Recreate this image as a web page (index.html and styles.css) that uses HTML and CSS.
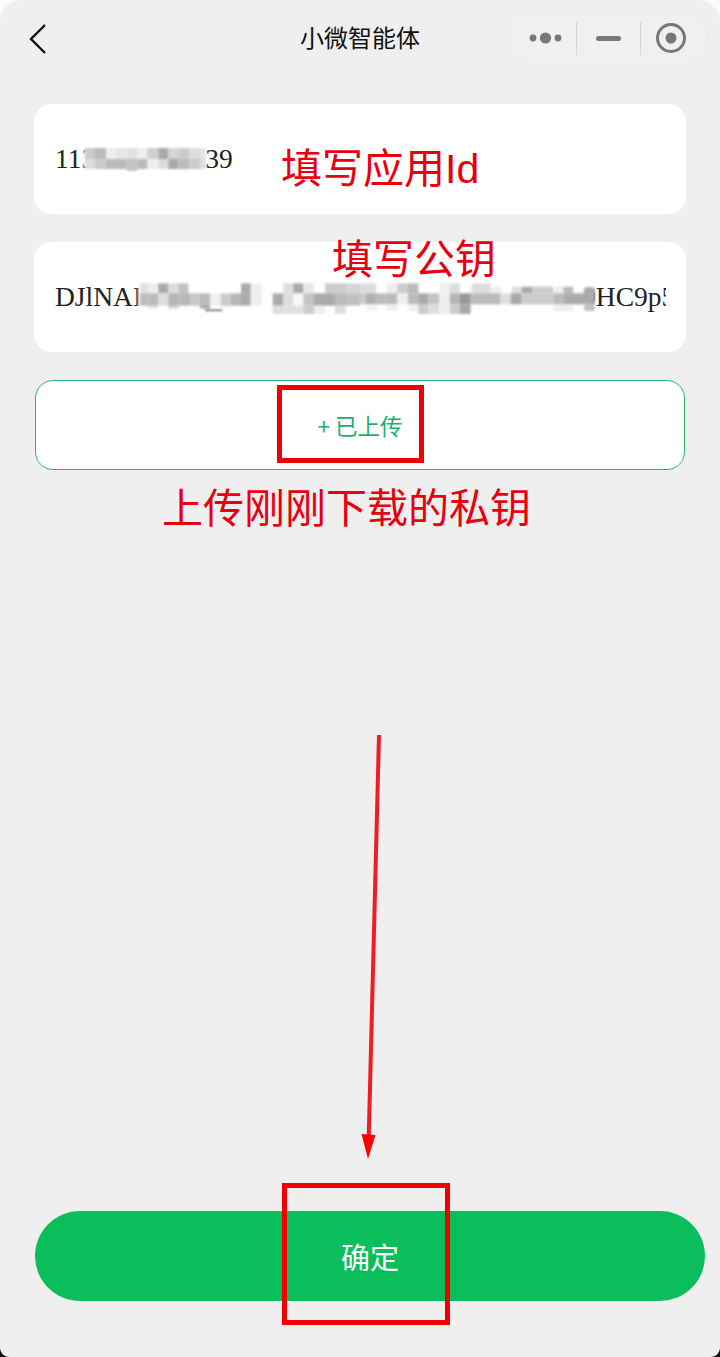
FILE: index.html
```html
<!DOCTYPE html>
<html lang="zh-CN">
<head>
<meta charset="utf-8">
<title>小微智能体</title>
<link rel="stylesheet" href="styles.css">
</head>
<body>
<div class="screen">
  <header class="nav">
    <svg class="back" width="20" height="32" viewBox="0 0 20 32"><path d="M17 2 L3 16 L17 30" fill="none" stroke="#111" stroke-width="2.4"/></svg>
    <h1 class="title">小微智能体</h1>
    <div class="capsule">
      <svg class="cap-dots" width="36" height="14" viewBox="0 0 36 14"><circle cx="5" cy="7" r="3.4"/><circle cx="17.5" cy="7" r="5.6"/><circle cx="30" cy="7" r="3.4"/></svg>
      <span class="cap-line cap-line-a"></span>
      <span class="cap-min"></span>
      <span class="cap-line cap-line-b"></span>
      <svg class="cap-rec" width="32" height="32" viewBox="0 0 32 32"><circle cx="16" cy="16" r="13.5" fill="none" stroke="#777" stroke-width="3"/><circle cx="16" cy="16" r="5.5" fill="#777"/></svg>
    </div>
  </header>

  <main class="form">
    <div class="field"><span class="value">1130000000039</span></div>
    <div class="field"><span class="value">DJlNAI000000000000000000000000000000000HC9p5x</span></div>
    <div class="upload">+ 已上传</div>
  </main>

  <button class="confirm">确定</button>

  <svg class="mosaic mosaic-id" width="124" height="24" viewBox="0 0 372 72">
    <rect x="0" y="0" width="372" height="72" rx="24" fill="#fff"/>
    <g>
      <rect x="6" y="3" width="30" height="33" fill="#ccc"/><rect x="36" y="3" width="33" height="33" fill="#bbb"/><rect x="69" y="3" width="30" height="33" fill="#eee"/><rect x="99" y="3" width="32" height="33" fill="#e6e6e6"/><rect x="131" y="3" width="32" height="33" fill="#e0e0e0"/><rect x="163" y="3" width="30" height="33" fill="#eee"/><rect x="193" y="3" width="33" height="33" fill="#d0d0d0"/><rect x="226" y="3" width="30" height="33" fill="#aaa"/><rect x="256" y="3" width="30" height="33" fill="#d5d5d5"/><rect x="286" y="3" width="33" height="33" fill="#ccc"/><rect x="319" y="3" width="32" height="33" fill="#ddd"/><rect x="351" y="3" width="18" height="33" fill="#e5e5e5"/>
      <rect x="6" y="36" width="30" height="30" fill="#ddd"/><rect x="36" y="36" width="33" height="30" fill="#ccc"/><rect x="69" y="36" width="30" height="30" fill="#bbb"/><rect x="99" y="36" width="32" height="30" fill="#bbb"/><rect x="131" y="36" width="32" height="36" fill="#c4c4c4"/><rect x="163" y="36" width="30" height="30" fill="#bbb"/><rect x="193" y="36" width="33" height="30" fill="#eee"/><rect x="226" y="36" width="30" height="30" fill="#ddd"/><rect x="256" y="36" width="30" height="30" fill="#a8a8a8"/><rect x="286" y="36" width="33" height="30" fill="#bbb"/><rect x="319" y="36" width="32" height="30" fill="#ccc"/><rect x="351" y="36" width="18" height="30" fill="#ddd"/>
    </g>
  </svg>

  <svg class="mosaic mosaic-key-a" width="240" height="50" viewBox="0 0 720 150">
    <rect x="24" y="20" width="696" height="100" fill="#fff"/>
    <rect x="30" y="25" width="25" height="30" fill="#e0e0e0"/><rect x="55" y="25" width="30" height="30" fill="#eee"/><rect x="85" y="25" width="30" height="30" fill="#aaa"/><rect x="115" y="25" width="30" height="30" fill="#ddd"/><rect x="145" y="25" width="30" height="30" fill="#c0c0c0"/><rect x="333" y="25" width="29" height="30" fill="#aaa"/><rect x="362" y="25" width="33" height="30" fill="#eee"/><rect x="460" y="25" width="30" height="30" fill="#ddd"/><rect x="490" y="25" width="30" height="30" fill="#aaa"/><rect x="520" y="25" width="32" height="30" fill="#e8e8e8"/><rect x="585" y="25" width="63" height="30" fill="#ccc"/><rect x="648" y="25" width="72" height="30" fill="#d5d5d5"/>
    <rect x="30" y="55" width="25" height="37" fill="#bbb"/><rect x="55" y="55" width="30" height="37" fill="#bbb"/><rect x="85" y="55" width="30" height="37" fill="#ddd"/><rect x="115" y="55" width="30" height="37" fill="#b5b5b5"/><rect x="145" y="55" width="35" height="37" fill="#b8b8b8"/><rect x="180" y="55" width="30" height="37" fill="#c8c8c8"/><rect x="210" y="55" width="30" height="37" fill="#bbb"/><rect x="240" y="55" width="32" height="37" fill="#f0f0f0"/><rect x="272" y="55" width="31" height="37" fill="#ccc"/><rect x="303" y="55" width="30" height="37" fill="#b8b8b8"/><rect x="333" y="55" width="29" height="37" fill="#aaa"/><rect x="362" y="55" width="33" height="37" fill="#eee"/><rect x="428" y="55" width="32" height="37" fill="#aaa"/><rect x="460" y="55" width="30" height="37" fill="#ddd"/><rect x="490" y="55" width="30" height="37" fill="#f8f8f8"/><rect x="520" y="55" width="32" height="37" fill="#c4c4c4"/><rect x="552" y="55" width="63" height="37" fill="#aaa"/><rect x="615" y="55" width="33" height="37" fill="#bbb"/><rect x="648" y="55" width="72" height="37" fill="#c0c0c0"/>
    <rect x="55" y="92" width="30" height="8" fill="#ddd"/><rect x="115" y="92" width="30" height="8" fill="#ccc"/><rect x="210" y="92" width="30" height="8" fill="#999"/><rect x="225" y="104" width="52" height="4" fill="#444"/><rect x="272" y="92" width="31" height="6" fill="#eee"/><rect x="428" y="92" width="32" height="25" fill="#ddd"/><rect x="460" y="92" width="60" height="25" fill="#e0e0e0"/><rect x="520" y="92" width="32" height="25" fill="#ccc"/><rect x="552" y="92" width="33" height="25" fill="#eee"/><rect x="615" y="92" width="33" height="25" fill="#ddd"/>
  </svg>

  <svg class="mosaic mosaic-key-b" width="240" height="50" viewBox="0 0 720 150">
    <rect x="0" y="20" width="700" height="100" fill="#fff"/>
    <rect x="0" y="25" width="48" height="30" fill="#ddd"/><rect x="80" y="25" width="32" height="30" fill="#eee"/><rect x="112" y="25" width="32" height="30" fill="#ccc"/><rect x="144" y="25" width="31" height="30" fill="#bbb"/><rect x="240" y="25" width="30" height="30" fill="#eee"/><rect x="270" y="25" width="30" height="30" fill="#ddd"/><rect x="335" y="25" width="55" height="30" fill="#ddd"/><rect x="390" y="35" width="35" height="20" fill="#eee"/><rect x="455" y="35" width="30" height="20" fill="#ddd"/><rect x="485" y="35" width="32" height="20" fill="#aaa"/><rect x="517" y="35" width="63" height="20" fill="#ccc"/><rect x="585" y="35" width="25" height="20" fill="#eee"/><rect x="610" y="35" width="30" height="20" fill="#bbb"/>
    <rect x="0" y="55" width="17" height="33" fill="#ccc"/><rect x="17" y="55" width="33" height="33" fill="#b0b0b0"/><rect x="50" y="55" width="30" height="33" fill="#bbb"/><rect x="80" y="55" width="32" height="33" fill="#bbb"/><rect x="112" y="55" width="32" height="33" fill="#eee"/><rect x="144" y="55" width="31" height="33" fill="#bbb"/><rect x="175" y="55" width="30" height="33" fill="#aaa"/><rect x="205" y="55" width="32" height="33" fill="#c4c4c4"/><rect x="237" y="55" width="33" height="33" fill="#eee"/><rect x="270" y="55" width="30" height="33" fill="#b5b5b5"/><rect x="300" y="55" width="32" height="33" fill="#999"/><rect x="332" y="55" width="88" height="33" fill="#bbb"/><rect x="420" y="55" width="32" height="33" fill="#ddd"/><rect x="452" y="55" width="33" height="33" fill="#aaa"/><rect x="485" y="55" width="95" height="33" fill="#ccc"/><rect x="580" y="55" width="30" height="33" fill="#bbb"/><rect x="610" y="55" width="62" height="33" fill="#aaa"/><rect x="672" y="37" width="33" height="51" rx="8" fill="#aaa"/>
    <rect x="20" y="88" width="30" height="20" fill="#f2f2f2"/><rect x="80" y="88" width="32" height="20" fill="#eee"/><rect x="144" y="88" width="31" height="20" fill="#f0f0f0"/><rect x="175" y="88" width="30" height="29" fill="#ccc"/><rect x="205" y="88" width="32" height="29" fill="#ddd"/><rect x="237" y="88" width="33" height="29" fill="#eee"/><rect x="270" y="88" width="30" height="29" fill="#ccc"/><rect x="300" y="88" width="32" height="29" fill="#aaa"/><rect x="580" y="88" width="60" height="20" fill="#eee"/><rect x="672" y="88" width="33" height="20" rx="8" fill="#c0c0c0"/>
  </svg>

  <span class="note note-id">填写应用Id</span>
  <span class="note note-key">填写公钥</span>
  <span class="note note-private">上传刚刚下载的私钥</span>
  <span class="mark mark-upload"></span>
  <span class="mark mark-confirm"></span>
  <svg class="arrow" width="40" height="440" viewBox="0 0 40 440">
    <path d="M29 1 L18.5 412" fill="none" stroke="#ee1c25" stroke-width="4"/>
    <path d="M11.5 400 L25.5 401 L18 425 Z" fill="#f00"/>
  </svg>
</div>
</body>
</html>
```

FILE: styles.css
```css
* { box-sizing: border-box; }

html, body {
  margin: 0;
  height: 1357px;
  overflow: hidden;
  background: linear-gradient(#fafafa 0 50%, #111 50% 100%);
}

.screen {
  position: relative;
  display: flex;
  flex-direction: column;
  width: 720px;
  height: 1357px;
  background: #efefef;
  border-radius: 22px 22px 9px 9px;
  font-family: "Noto Sans CJK SC", "Noto Sans", sans-serif;
}

.nav {
  position: relative;
  flex: none;
  display: flex;
  align-items: center;
  justify-content: center;
  height: 104px;
  padding-bottom: 30px;
}

.back {
  position: absolute;
  left: 28px;
  top: 23px;
}

.title {
  margin: 0;
  font-size: 24px;
  font-weight: 400;
  line-height: 32px;
  color: #111;
}

.capsule {
  position: absolute;
  left: 506px;
  top: 11px;
  width: 202px;
  height: 54px;
  border: 1px solid #ebebeb;
  border-radius: 27px;
  background: #f0f0f0;
}

.cap-dots { position: absolute; left: 21px; top: 19px; fill: #777; }
.cap-line { position: absolute; top: 10px; width: 1px; height: 33px; background: #d4d4d4; }
.cap-line-a { left: 69px; }
.cap-line-b { left: 133px; }
.cap-min { position: absolute; left: 89px; top: 24px; width: 25px; height: 5px; border-radius: 3px; background: #777; }
.cap-rec { position: absolute; left: 148px; top: 10px; }

.form {
  display: flex;
  flex-direction: column;
  gap: 28px;
  padding: 0 34px;
}

.field {
  display: flex;
  align-items: center;
  height: 110px;
  padding: 0 20px 0 21px;
  border-radius: 18px;
  background: #fff;
}

.value {
  min-width: 0;
  overflow: hidden;
  font-family: "Liberation Serif", "Times New Roman", serif;
  font-size: 27.5px;
  line-height: 34px;
  color: #222;
  white-space: nowrap;
}

.upload {
  display: flex;
  align-items: center;
  justify-content: center;
  height: 90px;
  margin: 0 1px;
  border: 1.5px solid #2fb56c;
  border-radius: 18px;
  background: #fff;
  font-size: 22.5px;
  color: #1fae6e;
}

.confirm {
  display: block;
  width: 670px;
  height: 90px;
  margin: auto 0 56px 35px;
  border: 0;
  border-radius: 45px;
  background: #0abf5b;
  font-family: "Noto Sans CJK SC", sans-serif;
  font-size: 29px;
  color: #fff;
}

.mosaic { position: absolute; filter: blur(0.9px); }
.mosaic-id { left: 83px; top: 147px; }
.mosaic-key-a { left: 130px; top: 275px; }
.mosaic-key-b { left: 360px; top: 275px; }

.note {
  position: absolute;
  font-family: "Liberation Sans", "Noto Sans CJK SC", sans-serif;
  font-size: 41px;
  line-height: 41px;
  color: #e8000f;
  white-space: nowrap;
}
.note-id { left: 281px; top: 149px; }
.note-key { left: 332px; top: 240px; }
.note-private { left: 162px; top: 489px; }

.mark {
  position: absolute;
  border: 5px solid #f00000;
}
.mark-upload { left: 277px; top: 385px; width: 147px; height: 78px; }
.mark-confirm { left: 282px; top: 1183px; width: 168px; height: 142px; }

.arrow { position: absolute; left: 350px; top: 734px; }
```
